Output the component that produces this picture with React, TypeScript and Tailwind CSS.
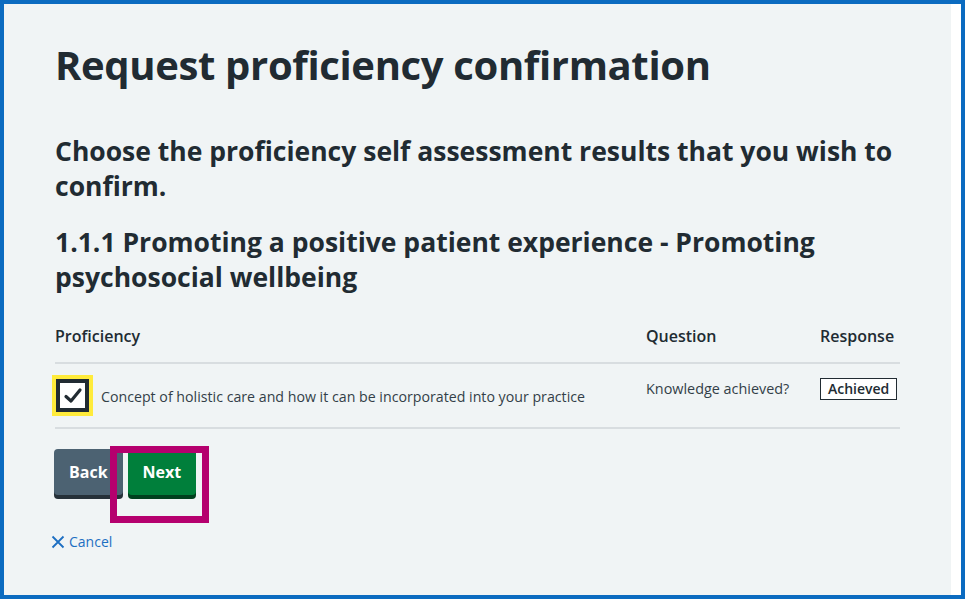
import React from 'react'

const font = { fontFamily: '"Open Sans", "Noto Sans", Arial, sans-serif' }

export default function App() {
  return (
    <div className="w-[967px] h-[601px] bg-white text-[#212b32]" style={font}>
      <div className="w-[965px] h-[599px] border-4 border-[#0b6bc0] flex">
        <div className="relative w-[947px] h-full bg-[#f0f4f5] pl-[51px] pr-[51px] pt-[33px]">
          <h1 className="text-[40px] font-bold leading-[56px] tracking-[-0.35px]">Request proficiency confirmation</h1>

          <h2 className="mt-[41px] text-[26.5px] font-bold leading-[35px]">
            Choose the proficiency self assessment results that you wish to confirm.
          </h2>

          <h3 className="mt-[21px] text-[26.5px] font-bold leading-[35px]">
            1.1.1 Promoting a positive patient experience - Promoting psychosocial wellbeing
          </h3>

          {/* table */}
          <div className="mt-[14px] w-[845px]">
            <div className="flex items-center h-[55px] border-b-2 border-[#d8dde0] text-[16px] font-semibold">
              <div className="w-[591px]">Proficiency</div>
              <div className="w-[174px]">Question</div>
              <div>Response</div>
            </div>
            <div className="flex h-[65px] border-b-2 border-[#d8dde0] text-[14.2px]">
              <div className="w-[591px] flex items-center">
                <div className="-ml-[3px] w-[41px] h-[41px] bg-[#ffeb3b] p-[4px]">
                  <div className="w-full h-full border-[4px] border-[#212b32] bg-white flex items-center justify-center">
                    <svg width="20" height="18" viewBox="0 0 20 18">
                      <path d="M3 9.5 L8 14 L17 3" fill="none" stroke="#212b32" strokeWidth="3.2" strokeLinecap="round" strokeLinejoin="round" />
                    </svg>
                  </div>
                </div>
                <span className="ml-[8px] mt-[2px] text-[#333f48]">Concept of holistic care and how it can be incorporated into your practice</span>
              </div>
              <div className="w-[174px] pt-[14px] text-[#333f48] text-[14.4px]">Knowledge achieved?</div>
              <div className="pt-[14px]">
                <span className="inline-block border border-[#212b32] bg-white px-[7px] leading-[20px] text-[14px] font-semibold">Achieved</span>
              </div>
            </div>
          </div>

          {/* buttons */}
          <div className="mt-[20px] flex gap-[5px] -ml-[1px]">
            <button className="h-[46px] px-[15px] rounded-[4px] bg-[#4c6272] text-white font-bold text-[16px] shadow-[0_4px_0_#263139]">Back</button>
            <button className="h-[46px] px-[15px] rounded-[4px] bg-[#007f3b] text-white font-bold text-[16px] shadow-[0_4px_0_#00401e]">Next</button>
          </div>

          <a className="mt-[36px] -ml-[4px] inline-flex items-center gap-[4px] text-[14px] text-[#1d6fc2]">
            <svg width="14" height="14" viewBox="0 0 14 14">
              <path d="M1.5 1.5 L12.5 12.5 M12.5 1.5 L1.5 12.5" stroke="#1d6fc2" strokeWidth="1.8" />
            </svg>
            Cancel
          </a>

          {/* annotation highlight */}
          <div className="absolute left-[106px] top-[442px] w-[99px] h-[77px] border-[7px] border-[#b5006e]" />
        </div>
        <div className="flex-1 bg-white" />
      </div>
    </div>
  )
}
